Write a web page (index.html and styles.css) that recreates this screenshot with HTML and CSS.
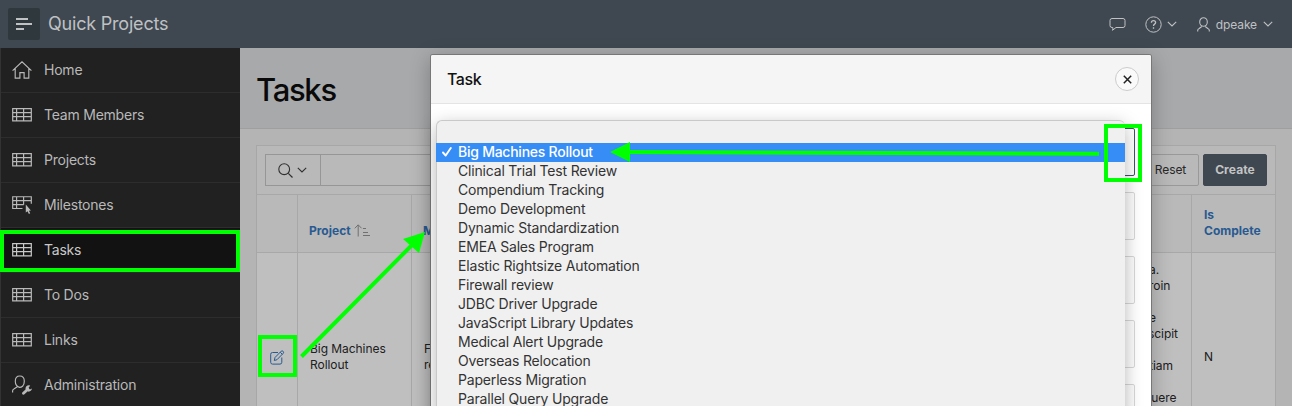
FILE: index.html
```html
<!DOCTYPE html>
<html lang="en">
<head>
<meta charset="utf-8">
<title>Quick Projects</title>
<link rel="stylesheet" href="styles.css">
</head>
<body>
<svg class="defs" width="0" height="0">
  <symbol id="grid" viewBox="0 0 20 14"><path d="M.7.7h18.6v12.1H.7zM.7 4.7h18.6M.7 8.7h18.6M4.6.7v12M11.6.7v12" fill="none" stroke="currentColor" stroke-width="1.2"/></symbol>
  <symbol id="chev" viewBox="0 0 10 6"><path d="M.8.8 5 5 9.200.8" fill="none" stroke="currentColor" stroke-width="1.1"/></symbol>
</svg>
<div class="app">
  <header class="topbar">
    <span class="menu-btn"><svg width="16" height="14" viewBox="0 0 16 14"><path d="M0 2h12M0 7h16M0 12h8" stroke="currentColor" stroke-width="2"/></svg></span>
    <span class="brand">Quick Projects</span>
    <nav class="tools">
      <svg class="chat" width="17" height="15" viewBox="0 0 17 15"><path d="M3 1.500h11q2 0 2 2v5q0 2-2 2H7l-3.500 2.800q.7-1.200.3-2.800H3q-2 0-2-2v-5q0-2 2-2z" fill="none" stroke="currentColor"/></svg>
      <span class="help"><svg width="17" height="17" viewBox="0 0 17 17" fill="none" stroke="currentColor"><circle cx="8.500" cy="8.500" r="7.700"/><path d="M6.400 6.700q0-2.100 2.100-2.100t2.100 1.900q0 1-1 1.600-1.100.7-1.100 1.900M8.500 11.300v1.500" stroke-width="1.300"/></svg><svg width="10" height="6"><use href="#chev"/></svg></span>
      <span class="user"><svg width="13" height="15" viewBox="0 0 13 15" fill="none" stroke="currentColor" stroke-width="1.100"><ellipse cx="6.500" cy="5" rx="3.800" ry="4.300"/><path d="M.7 14.500v-1q0-1.500 1.500-2L4.800 9.500M12.300 14.500v-1q0-1.500-1.500-2L8.200 9.500"/></svg><b class="uname">dpeake</b><svg width="10" height="6"><use href="#chev"/></svg></span>
    </nav>
  </header>
  <div class="main">
    <aside class="side">
      <a class="nav"><svg width="20" height="18" viewBox="0 0 20 18"><path d="M.6 9.600 10 .9l9.400 8.700M3.200 7.500v9.600h4.700v-5.500h4.200v5.500h4.700V7.500" fill="none" stroke="currentColor" stroke-width="1.150"/></svg>Home</a>
      <a class="nav"><svg width="20" height="14"><use href="#grid"/></svg>Team Members</a>
      <a class="nav"><svg width="20" height="14"><use href="#grid"/></svg>Projects</a>
      <a class="nav"><svg width="20" height="18" viewBox="0 0 20 18"><path d="M10.500 12.500H.7V.7h18.600v7M.7 4.600h18.600M.7 8.600h11M4.600.7v11.800M11.600.7v8" fill="none" stroke="currentColor" stroke-width="1.150"/><path d="M13.800 8.600v8l1.700-1.300 1.400 2.700 1.300-.7-1.300-2.600 2-.3z" fill="currentColor"/></svg>Milestones</a>
      <a class="nav current"><svg width="20" height="14"><use href="#grid"/></svg>Tasks</a>
      <a class="nav"><svg width="20" height="14"><use href="#grid"/></svg>To Dos</a>
      <a class="nav"><svg width="20" height="14"><use href="#grid"/></svg>Links</a>
      <a class="nav"><svg width="20" height="20" viewBox="0 0 20 20"><path d="M.6 17.500V16q0-1.400 1.300-2l3.800-2.400M10.800 11q-1.500 1.400-3.300 1.400Q3.300 11 3.300 6.200 3.300 1 7.800 1t4.500 5.200Q12.300 9 10.800 11z" fill="none" stroke="currentColor" stroke-width="1.150"/><path d="m11.500 18.300 4.300-4" stroke="currentColor" stroke-width="2.800" stroke-linecap="round"/><path d="M18.200 10.600a3.200 3.200 0 1 0 1.700 2.800l-2 1.200-1.400-1.500z" fill="currentColor"/></svg>Administration</a>
    </aside>
    <main class="content">
      <h1 class="title"><span>Tasks</span></h1>
      <section class="report">
        <div class="bar">
          <div class="search"><span class="search-btn"><svg width="15" height="15" viewBox="0 0 15 15"><path d="M10.300 10.300 14.500 14.500" stroke="currentColor" stroke-width="1.200"/><circle cx="6.200" cy="6.200" r="5.400" fill="none" stroke="currentColor" stroke-width="1.100"/></svg><svg width="10" height="6"><use href="#chev"/></svg></span></div>
          <span class="btn">Reset</span>
          <span class="btn hot">Create</span>
        </div>
        <div class="grid head">
          <div></div>
          <div><span class="c-project">Project</span><svg class="sort" width="17" height="13" viewBox="0 0 17 13"><path d="M4.200 12.500V1M.8 4.300 4.200.8l3.400 3.500M9 4.500h3M9 8.500h5M9 11.500h7" fill="none" stroke="currentColor"/></svg></div>
          <div>M</div>
          <div></div>
          <div class="c-complete">Is<br>Complete</div>
        </div>
        <div class="grid row">
          <div class="edit"><svg width="15" height="15" viewBox="0 0 15 15"><path d="M8 2.500H2.500q-1.800 0-1.800 1.800v8q0 1.800 1.800 1.800H10q1.800 0 1.800-1.800V7.500M4.300 10.500l.7-3L11.200 1.200q.9-.8 1.900.1t.1 2L7 9.700zM10.200 2.200l2.200 2.200" fill="none" stroke="currentColor"/></svg></div>
          <div>Big Machines<br>Rollout</div>
          <div>F<br>re</div>
          <div class="desc"><span class="line">a.</span><span class="line">roin</span><span class="line"></span><span class="line">e</span><span class="line wide">scipit</span><span class="line"></span><span class="line">tiam</span><span class="line"></span><span class="line wider">suere</span></div>
          <div>N</div>
        </div>
      </section>
    </main>
  </div>

  <div class="dialog">
    <div class="dialog-head"><span>Task</span><span class="close"><svg width="9" height="9" viewBox="0 0 9 9"><path d="m.8.8 7.400 7.400M8.200.8.800 8.200" stroke="currentColor" stroke-width="1.500"/></svg></span></div>
    <div class="fields">
      <div class="field focus"></div><div class="field"></div><div class="field"></div><div class="field"></div><div class="field"></div>
    </div>
  </div>

  <ul class="options">
    <li></li>
    <li class="picked"><svg class="check" width="10" height="10" viewBox="0 0 10 10"><path d="m1 5.500 2.700 3L8.800 1" fill="none" stroke="currentColor" stroke-width="1.900" stroke-linecap="round" stroke-linejoin="round"/></svg>Big Machines Rollout</li>
    <li>Clinical Trial Test Review</li>
    <li>Compendium Tracking</li>
    <li>Demo Development</li>
    <li>Dynamic Standardization</li>
    <li>EMEA Sales Program</li>
    <li>Elastic Rightsize Automation</li>
    <li>Firewall review</li>
    <li>JDBC Driver Upgrade</li>
    <li>JavaScript Library Updates</li>
    <li>Medical Alert Upgrade</li>
    <li>Overseas Relocation</li>
    <li>Paperless Migration</li>
    <li>Parallel Query Upgrade</li>
  </ul>

  <svg class="marks" width="1292" height="406" viewBox="0 0 1292 406">
    <g fill="none" stroke="#0f0" stroke-width="4">
      <path d="M2 232h236v38H2zM260 337h35v38h-35zM1106 126h34v54h-34z"/>
      <path d="M301.500 356.500 413 244M1099 153.700 628 152"/>
    </g>
    <path d="m425 232-22 7 16 14zM610 152l20-10v20z" fill="#0f0"/>
  </svg>
</div>
</body>
</html>
```
FILE: styles.css
```css
* { box-sizing: border-box; }
body { margin: 0; font-family: Inter, "Liberation Sans", sans-serif; overflow: hidden; }
svg { flex: none; display: block; }
.defs { position: absolute; }
.app { position: relative; width: 1292px; height: 406px; overflow: hidden; display: flex; flex-direction: column; background: #b4b4b4; }

.topbar { height: 48px; flex: none; background: #3f4851; color: #bfc1c3; display: flex; align-items: center; padding: 0 19px 0 8px; }
.menu-btn { width: 32px; height: 32px; background: #2f383d; border-radius: 2px; display: grid; place-items: center; }
.brand { margin-left: 8px; padding-bottom: 2px; font-size: 18px; letter-spacing: -0.2px; }
.tools { margin-left: auto; display: flex; align-items: center; }
.help { display: flex; align-items: center; gap: 5px; margin-left: 19px; }
.user { display: flex; align-items: center; gap: 6px; margin-left: 20px; font-size: 12px; }
.uname { font-weight: 400; letter-spacing: -0.1px; }

.main { flex: 1; min-height: 0; display: flex; }
.side { width: 240px; flex: none; background: #212121; border-left: 1px solid #333; }
.nav { height: 45px; display: flex; align-items: center; gap: 12px; padding: 0 0 2px 11px; color: #b9b9b9; font-size: 14px; letter-spacing: -0.22px; border-bottom: 1px solid #2d2d2d; }
.nav svg { margin-top: 2px; }
.current { background: #121212; color: #c8c8c8; }

.content { flex: 1; min-width: 0; }
.title { height: 81px; margin: 0; padding: 2px 0 0 16px; background: #a8a9ab; border-bottom: 1px solid #9f9f9f; font-size: 31px; letter-spacing: -1.3px; font-weight: 500; color: #090909; display: flex; align-items: center; }
.report { margin: 16px 16px 0; width: 1020px; height: 280px; border: 1px solid #a7a7a7; background: #bfbfbf; }
.bar { height: 48px; background: #b9b9b9; display: flex; padding: 8px 8px 0; }
.search { flex: 1; height: 32px; border: 1px solid #969696; }
.search-btn { width: 55px; height: 30px; border-right: 1px solid #969696; display: flex; align-items: center; justify-content: center; gap: 4px; color: #303030; padding-right: 2px; }
.btn { height: 32px; width: 56px; padding: 0 1px 1px 0; font-size: 12px; letter-spacing: -0.1px; border: 1px solid #999; border-radius: 2px; display: grid; place-items: center; color: #282828; }
.hot { width: 64px; padding: 0 0 1px; margin-left: 4px; background: #3f4851; border-color: #3f4851; color: #c4c4c4; font-weight: 700; letter-spacing: 0.1px; }
.grid { display: grid; grid-template-columns: 41px 114px 700px 80px 83px; font-size: 12px; line-height: 16px; color: #202020; }
.grid > div { padding: 0 12px; display: flex; align-items: center; border-right: 1px solid #a8a8a8; }
.grid > div:nth-child(3), .grid > div:last-child { border-right: 0; }
.head { height: 59px; border: 1px solid #a8a8a8; border-width: 1px 0; background: #b9b9b9; color: #285a91; font-weight: 700; }
.head > div { padding: 14px 0 0 11px; }
.head > .c-complete { padding: 0 0 2px 12px; }
.sort { margin-left: 3px; color: #707070; }
.row { height: 208px; letter-spacing: -0.05px; }
.grid > .edit { color: #285a91; justify-content: center; padding: 0; }
.row > .desc { padding: 9px 0 0 37px; flex-direction: column; align-items: flex-start; }
.line { height: 16px; flex: none; }
.wide { margin-left: -1px; }
.wider { margin-left: -4px; }

.dialog { position: absolute; left: 431px; top: 55px; width: 720px; height: 400px; background: #fff; border-radius: 2px 2px 0 0; box-shadow: 0 0 0 1px #777, 0 5px 20px 2px rgba(0,0,0,.24); }
.dialog-head { height: 49px; background: #f5f5f5; border-bottom: 1px solid #e4e4e4; display: flex; align-items: center; justify-content: space-between; padding: 0 12px 0 16px; font-size: 16px; letter-spacing: -0.4px; font-weight: 500; color: #111; border-radius: 2px 2px 0 0; }
.close { width: 24px; height: 24px; border: 1px solid #ccc; border-radius: 50%; display: grid; place-items: center; color: #222; background: #fafafa; }
.fields { display: flex; flex-direction: column; gap: 16px; padding: 24px 16px; }
.field { height: 48px; flex: none; border: 1px solid #d7d7d7; border-radius: 2px; background: #fcfcfc; }
.focus { border-color: #425365; background: #fff; }

.options { position: absolute; left: 436px; top: 120px; width: 689px; height: 320px; margin: 0; padding: 3px 0; list-style: none; background: #f0f0f0; border: 1px solid #c9c9c9; border-width: 1px 0 0 1px; border-radius: 6px 6px 0 0; box-shadow: 0 5px 18px rgba(0,0,0,.28); font-size: 14px; letter-spacing: -0.18px; color: #333; }
.options li { height: 19px; line-height: 17px; padding-left: 21px; }
.options .picked { background: #378df6; color: #fff; font-weight: 500; letter-spacing: -0.25px; display: flex; align-items: center; gap: 6px; margin-left: -1px; padding: 0 0 2px 6px; }
.check { margin-top: 1px; }
.marks { position: absolute; left: 0; top: 0; }
```
